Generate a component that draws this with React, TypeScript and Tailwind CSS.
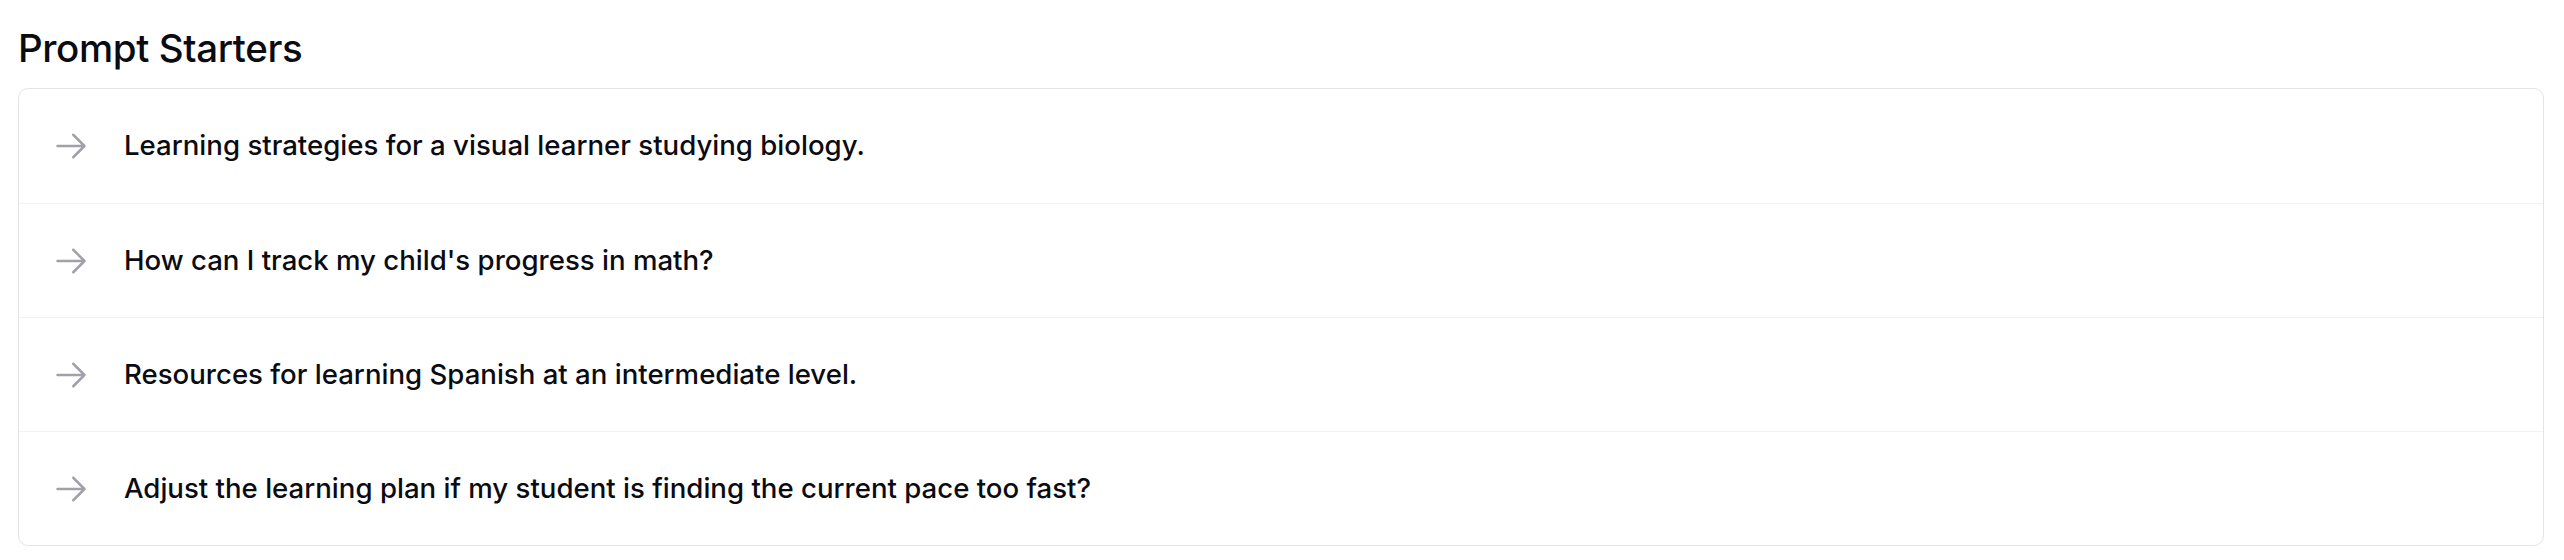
import React from 'react';

const starters = [
  'Learning strategies for a visual learner studying biology.',
  "How can I track my child's progress in math?",
  'Resources for learning Spanish at an intermediate level.',
  'Adjust the learning plan if my student is finding the current pace too fast?',
];

const Arrow = () => (
  <svg
    width="36"
    height="36"
    viewBox="0 0 24 24"
    fill="none"
    stroke="currentColor"
    strokeWidth={1.65}
    strokeLinecap="round"
    strokeLinejoin="round"
    className="shrink-0 text-[#a1a1aa]"
  >
    <path d="M13.5 4.5 21 12m0 0-7.5 7.5M21 12H3" />
  </svg>
);

export default function App() {
  return (
    <div className="min-h-[560px] bg-white pl-[18px] pr-[20px] pt-[24px] font-['Inter','Liberation_Sans',sans-serif] text-[#0b0b12]">
      {/* Header */}
      <h2 className="mb-[16px] text-[38.5px] leading-[48px] font-medium tracking-[-0.01em]">Prompt Starters</h2>

      {/* List */}
      <div className="rounded-[10px] border border-[#e4e4e7] bg-white">
        {starters.map((s, i) => (
          <div
            key={i}
            className={`flex h-[114px] items-center gap-[35px] pl-[34px] ${i > 0 ? 'border-t border-[#f2f2f4]' : ''}`}
          >
            <Arrow />
            <span className="text-[27.6px] font-medium leading-none">{s}</span>
          </div>
        ))}
      </div>
    </div>
  );
}
